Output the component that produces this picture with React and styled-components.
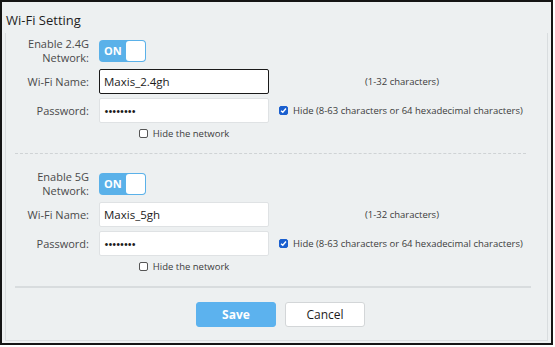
import React from 'react';
import styled, { createGlobalStyle } from 'styled-components';

const GlobalStyle = createGlobalStyle`
  html, body {
    margin: 0;
    padding: 0;
    background: #ffffff;
  }
  body {
    font-family: "Open Sans", "Noto Sans", sans-serif;
  }
`;

const Frame = styled.div`
  box-sizing: border-box;
  width: 553px;
  height: 345px;
  border: 2px solid #151515;
  background: #edf0f1;
  display: flex;
  flex-direction: column;
  padding: 3px 3px 2px 3px;
`;

const Panel = styled.div`
  flex: 1;
  border-left: 1px solid #d9dddf;
  border-right: 1px solid #d9dddf;
  border-bottom: 1px solid #d9dddf;
  display: flex;
  flex-direction: column;
`;

const Title = styled.div`
  font-size: 13px;
  color: #1e1e1e;
  padding: 6px 0 0 1px;
  height: 28px;
  box-sizing: border-box;
`;

const Section = styled.div`
  display: grid;
  grid-template-columns: 83px 170px 246px;
  column-gap: 10px;
  align-items: center;
  padding-top: ${(p) => p.top}px;
`;

const Label = styled.div`
  font-size: 11px;
  line-height: 13.5px;
  color: #4a4a4a;
  text-align: right;
  margin-bottom: ${(p) => p.mb || 0}px;
`;

const Toggle = styled.div`
  width: 47px;
  height: 22px;
  box-sizing: border-box;
  border-radius: 4px;
  background: #5ab1e9;
  display: flex;
  align-items: center;
  padding: 1px;
  margin-bottom: ${(p) => p.mb || 0}px;
`;

const ToggleText = styled.span`
  flex: 1;
  color: #ffffff;
  font-size: 11px;
  font-weight: 700;
  padding-left: 4px;
`;

const Knob = styled.span`
  width: 19px;
  height: 20px;
  border-radius: 3px;
  background: #ffffff;
`;

const Input = styled.div`
  box-sizing: border-box;
  height: 25px;
  background: #ffffff;
  border: 1px solid ${(p) => (p.focused ? '#1a1a1a' : '#dfe2e4')};
  border-radius: 2px;
  font-size: ${(p) => (p.dots ? '13px' : '11.5px')};
  letter-spacing: ${(p) => (p.dots ? '-1px' : '0')};
  color: #1b1b1b;
  display: flex;
  align-items: center;
  padding-left: 4px;
  margin-bottom: ${(p) => p.mb || 0}px;
`;

const Hint = styled.div`
  font-size: 9.5px;
  color: #3c3c3c;
  text-align: center;
  white-space: nowrap;
  margin-bottom: ${(p) => p.mb || 0}px;
`;

const CheckRow = styled.div`
  display: flex;
  align-items: center;
  gap: 5px;
  font-size: 9.5px;
  color: #3c3c3c;
  white-space: nowrap;
  height: ${(p) => p.h || 'auto'};
  justify-content: ${(p) => (p.center ? 'center' : 'flex-start')};
  margin-bottom: ${(p) => p.mb || 0}px;
`;

const Box = styled.span`
  box-sizing: border-box;
  width: 9px;
  height: 9px;
  border-radius: 2px;
  border: 1px solid ${(p) => (p.checked ? '#1a5fcf' : '#555')};
  background: ${(p) => (p.checked ? '#1a5fcf' : '#fff')};
  display: flex;
  align-items: center;
  justify-content: center;
`;

const Spacer = styled.div``;

const Dashed = styled.div`
  margin: 10px 21px 0 9px;
  border-top: 1px dashed #cfd3d5;
`;

const Solid = styled.div`
  margin: 10px 16px 0 9px;
  height: 2px;
  background: #d8dcde;
`;

const Buttons = styled.div`
  display: flex;
  justify-content: center;
  gap: 9px;
  padding-top: 14px;
  padding-left: 8px;
`;

const Button = styled.div`
  box-sizing: border-box;
  width: 80px;
  height: 25px;
  border-radius: 3px;
  display: flex;
  align-items: center;
  justify-content: center;
  font-size: 12px;
  font-weight: ${(p) => (p.primary ? 700 : 400)};
  color: ${(p) => (p.primary ? '#ffffff' : '#1c1c1c')};
  background: ${(p) => (p.primary ? '#5cb2ee' : '#ffffff')};
  border: 1px solid ${(p) => (p.primary ? '#5cb2ee' : '#d3d6d8')};
`;

const Check = () => (
  <svg width="7" height="7" viewBox="0 0 8 8">
    <path d="M1.2 4.2 L3.2 6 L6.8 1.8" fill="none" stroke="#fff" strokeWidth="1.6" />
  </svg>
);

function NetworkSection({ band, name, focused, top }) {
  return (
    <Section top={top}>
      <Label mb={5}>
        Enable {band}
        <br />
        Network:
      </Label>
      <Toggle mb={5}>
        <ToggleText>ON</ToggleText>
        <Knob />
      </Toggle>
      <Spacer />

      <Label mb={4}>Wi-Fi Name:</Label>
      <Input focused={focused} mb={4}>{name}</Input>
      <Hint mb={4}>(1-32 characters)</Hint>

      <Label>Password:</Label>
      <Input dots>••••••••</Input>
      <CheckRow>
        <Box checked>
          <Check />
        </Box>
        Hide (8-63 characters or 64 hexadecimal characters)
      </CheckRow>

      <Spacer />
      <CheckRow center h="20px">
        <Box />
        Hide the network
      </CheckRow>
      <Spacer />
    </Section>
  );
}

export default function App() {
  return (
    <>
      <GlobalStyle />
      <Frame>
        <Title>Wi-Fi Setting</Title>
        <Panel>
          <NetworkSection band="2.4G" name="Maxis_2.4gh" focused top={4} />
          <Dashed />
          <NetworkSection band="5G" name="Maxis_5gh" top={16} />
          <Solid />
          <Buttons>
            <Button primary>Save</Button>
            <Button>Cancel</Button>
          </Buttons>
        </Panel>
      </Frame>
    </>
  );
}
